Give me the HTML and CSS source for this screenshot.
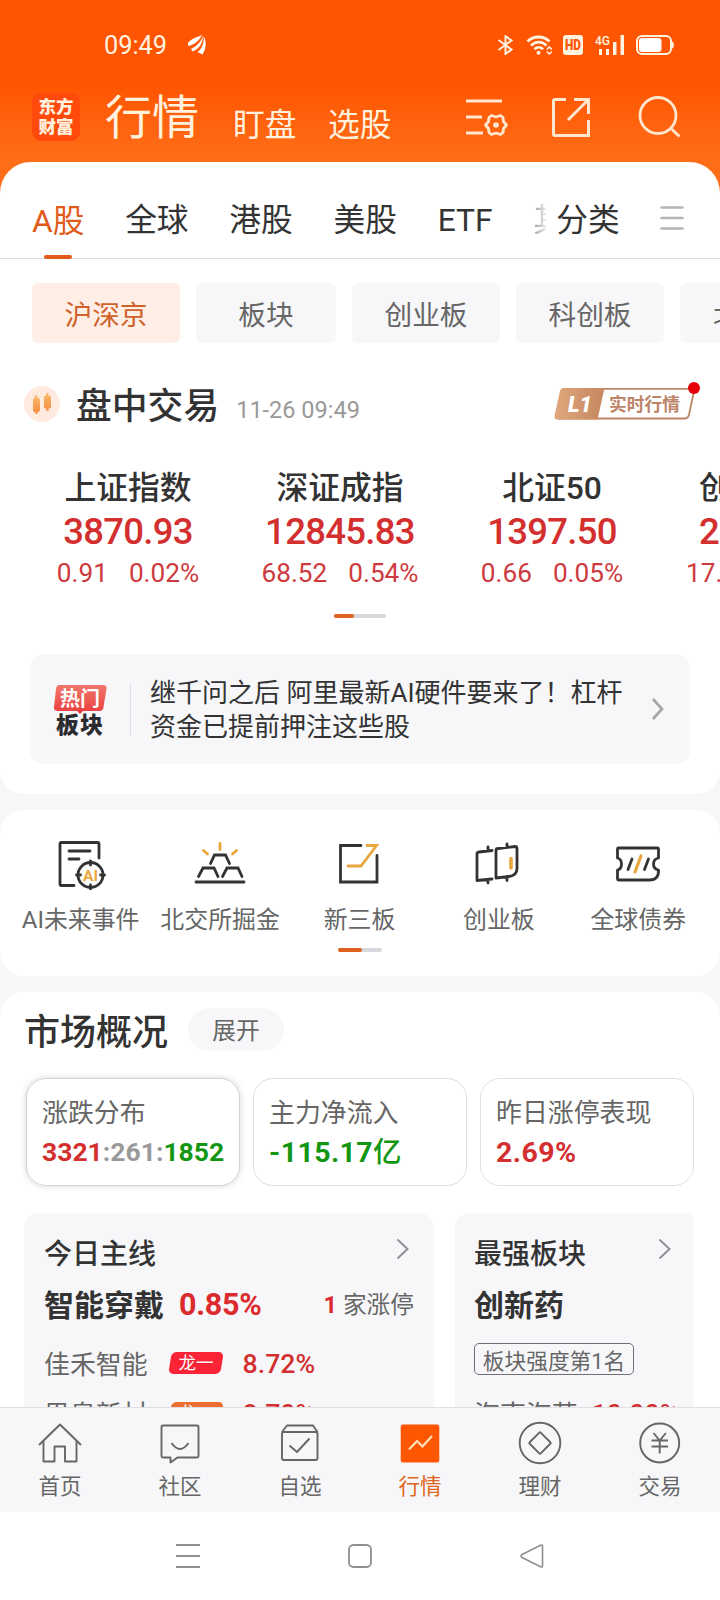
FILE: index.html
```html
<!DOCTYPE html>
<html lang="zh-CN">
<head>
<meta charset="utf-8">
<title>行情</title>
<link rel="stylesheet" href="styles.css">
</head>
<body>
<div class="phone">
  <main class="content">
    <div class="status">
      <span class="clock">09:49</span>
      <svg class="arrow" width="18" height="20" viewBox="0 0 18 20" fill="#fff"><path d="M0 8C3 4 8 2.500 14 0 11 6 6.500 9.800.300 11zM3 13.800C9.500 11 12.500 7 15 1 14.800 9 10.500 14.500 4.500 16.500zM9.500 17C14.500 13 16 8 15.700 1 19 7 18 14 14.500 19.500z"/></svg>
      <div class="status-icons">
        <svg width="16" height="20" viewBox="0 0 16 20" fill="none" stroke="#fff3e0" stroke-width="2"><path d="M.500 5l13 9.500-6 4.500V1l6 4.500L.500 15"/></svg>
        <svg class="wifi" width="27" height="20" viewBox="0 0 27 20" fill="none" stroke="#fff3e0" stroke-width="2.800"><path d="M1.500 6.500c6-6 16-6 22 0M5 10.500c4.500-4.500 11-4.500 15.500 0M8.500 14.200c2.500-2.500 6-2.500 8.500 0"/><circle cx="12.500" cy="17.700" r="2" fill="#fff3e0" stroke="none"/><path d="M20.800 14.500L23.300 12l2.500 2.500M20.800 16.500l2.500 2.500 2.500-2.500" stroke-width="1.600"/></svg>
        <svg width="20" height="20" viewBox="0 0 20 20"><rect width="20" height="20" rx="3" fill="#fff3e0"/><text class="hd" x="2" y="15.200" textLength="16" lengthAdjust="spacingAndGlyphs">HD</text></svg>
        <svg class="signal" width="29" height="20" viewBox="0 0 29 20" fill="#fff3e0"><text class="g4" x="0" y="10" textLength="15" lengthAdjust="spacingAndGlyphs">4G</text><path d="M4 14h3v6H4zM11 14h3v6h-3zM18 7h3.500v13H18zM25.500 0H29v20h-3.500z"/></svg>
        <svg width="38" height="20" viewBox="0 0 38 20"><rect x="1" y="1" width="34" height="18" rx="5" fill="none" stroke="#fff3e0" stroke-width="2"/><rect x="3" y="3" width="22.500" height="14" rx="3" fill="#fff"/><path d="M36 6.500c2.500 0 2.500 7 0 7z" fill="#fff3e0"/></svg>
      </div>
    </div>
    <header class="header">
      <div class="logo"><span>东方</span><span>财富</span></div>
      <h1 class="title">行情</h1>
      <span class="sub">盯盘</span>
      <span class="sub">选股</span>
      <div class="header-icons">
        <svg width="42" height="42" viewBox="0 0 42 42" fill="none" stroke="#ffe7cf" stroke-width="2.800"><path d="M0 5h36M0 21h16M0 37h17"/><path stroke-linejoin="round" d="M25.500 19.500l4.500 1.500 4.500-1.500 2.500 2 .500 4 3 3.500-3 3.500-.500 4-2.500 2-4.500-1.500-4.500 1.500-2.500-2-.500-4-3-3.500 3-3.500.500-4z"/><circle cx="30" cy="29" r="2.800" fill="#ffe7cf" stroke="none"/></svg>
        <svg class="share" width="38" height="42" viewBox="0 0 38 42" fill="none" stroke="#ffe7cf" stroke-width="3"><path d="M14 3.500H3Q1.500 3.500 1.500 5v33q0 1.500 1.500 1.500h33.500V24M22 3.500h14.500V18M36 4L16 24"/></svg>
        <svg width="42" height="42" viewBox="0 0 42 42" fill="none" stroke="#ffe7cf" stroke-width="2.800"><circle cx="20" cy="19.500" r="18"/><path d="M32.500 32l9 8.500"/></svg>
      </div>
    </header>

    <section class="sheet">
      <nav class="tabs">
        <span class="tab active">A股</span>
        <span class="tab">全球</span>
        <span class="tab">港股</span>
        <span class="tab">美股</span>
        <span class="tab">ETF</span>
        <span class="tab faded">其</span>
        <span class="tab more">分类</span>
        <svg class="burger" width="24" height="26" viewBox="0 0 24 26" stroke="#b4b4b4" stroke-width="2.600" stroke-linecap="round"><path d="M1.500 2.500h21M1.500 13h21M1.500 23.500h21"/></svg>
      </nav>
      <div class="chips">
        <span class="chip on">沪深京</span>
        <span class="chip two">板块</span>
        <span class="chip">创业板</span>
        <span class="chip">科创板</span>
        <span class="chip cut">北</span>
      </div>
      <div class="session">
        <svg width="36" height="36" viewBox="0 0 36 36"><defs><linearGradient id="candle" x1="0" y1="0" x2="0" y2="1"><stop offset="0" stop-color="#f9bd72"/><stop offset="1" stop-color="#f48a3c"/></linearGradient></defs><circle cx="18" cy="18" r="18" fill="#feeade"/><path d="M9 13.500q0-1 1.500-1.500V9.500h3V12q2.500 0 2.500 1.500v11q0 1-2.500 1.500v2h-2v-2q-2.500 0-2.500-1.500z" fill="url(#candle)"/><path d="M20 10.500q0-1 2-1V7h2.500v2.500q2.500 0 2.500 1v11q0 1-2.500 1V25h-2v-2.500q-2.500 0-2.500-1z" fill="url(#candle)"/></svg>
        <h2 class="session-title">盘中交易</h2>
        <span class="session-time">11-26 09:49</span>
        <svg class="badge" width="148" height="40" viewBox="0 0 148 40"><defs><linearGradient id="bronze"><stop offset="0" stop-color="#dfa77c"/><stop offset="1" stop-color="#c58761"/></linearGradient></defs><path d="M9 8.800h131.500l-5.500 26q-1 3.700-4 3.700H5q-3.500 0-2.500-3.500l5-23.500q.800-2.700 3.500-2.700z" fill="#fff" stroke="#bd8468" stroke-width="1.800"/><path d="M10 8h40.500L43.500 39.500H3.500Q0 39.500.500 36L6 11q.700-3 4-3z" fill="url(#bronze)"/><text class="badge-l1" x="14" y="32" textLength="24" lengthAdjust="spacingAndGlyphs">L1</text><text class="badge-text" x="55" y="30.500" textLength="71">实时行情</text><circle cx="140" cy="8" r="6" fill="#e60008"/></svg>
      </div>
      <div class="indices">
        <div class="index"><b class="name">上证指数</b><b class="value">3870.93</b><span class="delta"><i>0.91</i><i>0.02%</i></span></div>
        <div class="index"><b class="name">深证成指</b><b class="value">12845.83</b><span class="delta"><i>68.52</i><i>0.54%</i></span></div>
        <div class="index"><b class="name">北证50</b><b class="value">1397.50</b><span class="delta"><i>0.66</i><i>0.05%</i></span></div>
        <div class="index cut"><b class="name">创</b><b class="value">2</b><span class="delta"><i>17.</i></span></div>
      </div>
      <div class="pager"><i></i></div>
      <div class="news">
        <svg width="54" height="52" viewBox="0 0 54 52"><defs><linearGradient id="hot" x1="0" y1="0" x2="0" y2="1"><stop offset="0" stop-color="#f0776a"/><stop offset="1" stop-color="#ea3d3d"/></linearGradient></defs><path d="M5.500 1H49q4 0 3.500 4l-3 18q-.500 4-4 4H29l-3 3-3-3H3.500q-4 0-3.500-4L2 5q.500-4 3.500-4z" fill="url(#hot)"/><text class="hot-a" x="6" y="21.500" textLength="40">热门</text><text class="hot-b" x="2" y="48.500" textLength="47">板块</text></svg>
        <p class="news-text">继千问之后 阿里最新AI硬件要来了！杠杆资金已提前押注这些股</p>
        <svg class="chev" width="14" height="24" viewBox="0 0 14 24" fill="none" stroke="#a6a6a8" stroke-width="2.700"><path d="M2 2l9 10-9 10"/></svg>
      </div>
    </section>

    <section class="card tools">
      <div class="tool-row">
        <div class="tool">
          <svg width="52" height="52" viewBox="0 0 52 52" fill="none" stroke="#333" stroke-width="2.800" stroke-linecap="round" stroke-linejoin="round"><path d="M44 20V6q0-1.500-1.500-1.500h-36Q5 4.500 5 6v40q0 1.500 1.500 1.500H19M14 13h21M14 21h10"/><circle cx="35.500" cy="37" r="12.500"/><path d="M35.500 23v4M35.500 47v4M21.500 37h4M45.500 37h4"/><text class="ai" x="28" y="42.500" textLength="15" lengthAdjust="spacingAndGlyphs">AI</text></svg>
          <span>AI未来事件</span></div>
        <div class="tool">
          <svg width="52" height="52" viewBox="0 0 52 52" fill="none" stroke="#333" stroke-width="2.800" stroke-linecap="round"><path d="M2 44h48M16.500 25.500l4-8.500h11l4 8.500M4.500 38.500L9 30h11l4 8.500M28.500 38.500L33 30h11l4 8.500"/><path d="M26 5.500v6M9.500 12.500l4 3.500M42.500 12.500l-4 3.500" stroke="#e9a63c"/></svg>
          <span>北交所掘金</span></div>
        <div class="tool">
          <svg width="52" height="52" viewBox="0 0 52 52" fill="none" stroke="#333" stroke-width="2.800"><path d="M28 7.500H7.500V44H44V17.500" stroke-linecap="round"/><path d="M15 28h13L43.500 7.500H34" stroke="#e9a63c" stroke-linecap="round"/></svg>
          <span>新三板</span></div>
        <div class="tool">
          <svg width="52" height="52" viewBox="0 0 52 52" fill="none" stroke="#333" stroke-width="2.800" stroke-linecap="round" stroke-linejoin="round"><path d="M19 12.500L6 14q-2 .300-2 2v26.500L19 41M15 9v4M15 41.500V45M25 10.500l17-2q2 0 2 2v20q0 7-8 8L23 40V12.500q0-2 2-2zM34 6v3.500M34 38.500v4"/><path d="M38 20.500v9.500" stroke="#e9a63c" stroke-width="3.600"/></svg>
          <span>创业板</span></div>
        <div class="tool">
          <svg width="52" height="52" viewBox="0 0 52 52" fill="none" stroke="#333" stroke-width="2.800" stroke-linecap="round" stroke-linejoin="round"><path d="M6.500 10h39q1 0 1 1v9q-5 1-5 6t5 6q.500 10-9 10h-31q-1 0-1-1v-9q4-1 4-6t-4-6v-9q0-1 1-1z"/><path d="M20 21l-4 10.500M36.500 21l-4 10.500"/><path d="M29 18l-6 16" stroke="#e9a63c" stroke-width="3.200"/></svg>
          <span>全球债券</span></div>
      </div>
      <div class="pager small"><i></i></div>
    </section>

    <section class="card market">
      <div class="market-head"><h2>市场概况</h2><span class="pill">展开</span></div>
      <div class="stats">
        <div class="stat lifted"><span>涨跌分布</span><b class="ratio"><em class="up">3321</em>:261:<em class="down">1852</em></b></div>
        <div class="stat"><span>主力净流入</span><b class="down">-115.17<em class="unit">亿</em></b></div>
        <div class="stat"><span>昨日涨停表现</span><b class="up">2.69%</b></div>
      </div>
      <div class="panels">
        <div class="panel main">
          <div class="panel-head"><h3>今日主线</h3><svg width="14" height="22" viewBox="0 0 14 22" fill="none" stroke="#929296" stroke-width="2"><path d="M1.500 1.500l10 9.500-10 9.500"/></svg></div>
          <div class="theme"><b>智能穿戴</b><b class="theme-pct">0.85%</b><span class="limit"><em>1</em> 家涨停</span></div>
          <div class="stock"><span>佳禾智能</span><i class="tag"><u>龙一</u></i><b>8.72%</b></div>
          <div class="stock"><span>思泉新材</span><i class="tag second"><u>龙二</u></i><b>8.70%</b></div>
        </div>
        <div class="panel side">
          <div class="panel-head"><h3>最强板块</h3><svg width="14" height="22" viewBox="0 0 14 22" fill="none" stroke="#929296" stroke-width="2"><path d="M1.500 1.500l10 9.500-10 9.500"/></svg></div>
          <div class="theme"><b>创新药</b></div>
          <div class="rank">板块强度第1名</div>
          <div class="stock"><span>海南海药</span><b>10.00%</b></div>
        </div>
      </div>
    </section>
  </main>

  <nav class="bottom">
    <div class="item"><svg width="44" height="44" viewBox="0 0 44 44" fill="none" stroke="#666" stroke-width="1.900" stroke-linejoin="round"><path d="M1 24L22 3.500 43 24M5.500 20v20.500h11V25.500h10.500v15h11.500V20"/></svg><span>首页</span></div>
    <div class="item"><svg width="44" height="44" viewBox="0 0 44 44" fill="none" stroke="#666" stroke-width="1.900" stroke-linejoin="round"><path d="M5 4.500h34q1.500 0 1.500 1.500v29q0 1.500-1.500 1.500H19.500l-7 5v-5H5q-1.500 0-1.500-1.500V6Q3.500 4.500 5 4.500zM13.500 22q8.500 12 17 0"/></svg><span>社区</span></div>
    <div class="item"><svg width="44" height="44" viewBox="0 0 44 44" fill="none" stroke="#666" stroke-width="1.900" stroke-linejoin="round"><path d="M4 11L9 4.500h26L39.500 11"/><rect x="4" y="11" width="35.500" height="28" rx="2"/><path d="M11.500 24.500l7.500 6.500 12.500-13.500"/></svg><span>自选</span></div>
    <div class="item current"><svg width="44" height="44" viewBox="0 0 44 44"><rect x="2.700" y="3.500" width="38.600" height="38" rx="2.500" fill="#ff5600"/><path d="M11 28.500l8-8.500 5.500 5.500L34 15" fill="none" stroke="#ffe0b8" stroke-width="2.200"/></svg><span>行情</span></div>
    <div class="item"><svg width="44" height="44" viewBox="0 0 44 44" fill="none" stroke="#666" stroke-width="1.900" stroke-linejoin="round"><circle cx="22" cy="22" r="20.300"/><rect x="14.200" y="14.200" width="15.600" height="15.600" rx="1" transform="rotate(45 22 22)"/></svg><span>理财</span></div>
    <div class="item"><svg width="44" height="44" viewBox="0 0 44 44" fill="none" stroke="#666" stroke-width="1.900"><circle cx="21.700" cy="22" r="19.500"/><path d="M15.500 12l6.200 7.500 6.200-7.500M13.500 19.500h16.500M13.500 25.500h16.500M21.700 19.500v13"/></svg><span>交易</span></div>
  </nav>
  <footer class="system">
    <svg width="24" height="26" viewBox="0 0 24 26" stroke="#8f8f8f" stroke-width="1.800"><path d="M0 2h24M0 13h24M0 24h24"/></svg>
    <svg width="24" height="26" viewBox="0 0 24 26" fill="none" stroke="#8f8f8f" stroke-width="1.800"><rect x="1" y="2" width="22" height="22" rx="4.500"/></svg>
    <svg width="24" height="26" viewBox="0 0 24 26" fill="none" stroke="#8f8f8f" stroke-width="1.600"><path d="M2 11.500L20.500 2.200q2-.700 2 1.500v18.600q0 2.200-2 1.500L2 14.500q-2-1.500 0-3z"/></svg>
  </footer>
</div>
</body>
</html>
```
FILE: styles.css
```css
* { box-sizing: border-box; margin: 0; padding: 0; }
body { font-family: Roboto, "Noto Sans CJK SC", sans-serif; color: #333; }
i, em { font-style: normal; }
u { text-decoration: none; }
svg { display: block; flex: none; }
h1, h2, h3 { font-weight: 500; white-space: nowrap; }
span, b { white-space: nowrap; }

.phone { width: 720px; height: 1600px; overflow: hidden; display: flex; flex-direction: column; background: #fff; }
.content {
  height: 1407px; flex: none; overflow: hidden; background-color: #f5f7f9;
  background-image: linear-gradient(#ff5400 0, #ff5400 80px, #ff6d18 158px, #ff6d18 210px);
  background-size: 100% 210px; background-repeat: no-repeat;
}

.status { height: 90px; display: flex; align-items: center; padding: 0 46px 0 104px; }
.clock { width: 84px; font-size: 25.300px; line-height: 30px; padding-top: 1px; color: #fff3e0; }
.status-icons { margin-left: auto; display: flex; align-items: center; gap: 12px; }
.wifi { margin-right: -2px; }
.hd { font: 900 14.500px Roboto, sans-serif; fill: #ff5400; }
.g4 { font: 500 13px Roboto, sans-serif; }
.signal { overflow: visible; }

.header { height: 72px; display: flex; align-items: flex-start; padding: 0 40px 0 32px; color: #fff1dd; }
.logo { width: 48px; height: 48px; margin-top: 3px; border-radius: 9px; background: #ff4a0c; display: flex; flex-direction: column; align-items: center; justify-content: center; }
.logo span { font-size: 17.500px; font-weight: 900; line-height: 20px; }
.title { font-size: 47px; font-weight: 400; line-height: 50px; margin: 3px 0 0 25px; width: 128px; }
.sub { font-size: 31.700px; line-height: 40px; margin-top: 16px; width: 95px; }
.header-icons { display: flex; margin: 6px 0 0 auto; gap: 46px; }
.share { margin: 0 2px 0 -2px; }

.sheet { height: 632px; border-radius: 31px 31px 24px 24px; background: #fff; overflow: hidden; }
.tabs { height: 97px; display: flex; align-items: center; padding: 17px 0 0 32px; border-bottom: 1px solid #dcdcdc; font-size: 31.700px; }
.tab { line-height: 78px; margin-right: 40.800px; padding-top: 4px; }
.tab.active { color: #e05a1a; display: flex; flex-direction: column; align-items: center; }
.tab.active::after { content: ""; width: 28px; height: 4px; margin-top: -6px; border-radius: 2px; background: #e05a1a; }
.tab.faded { width: 13px; overflow: hidden; margin: 0 10px 0 0; background: linear-gradient(90deg, #999, #eee); -webkit-background-clip: text; background-clip: text; color: transparent; }
.tab.more { margin-right: 40px; }
.burger { margin-top: -1px; }

.chips { display: flex; gap: 16px; padding: 24px 0 0 32px; }
.chip { flex: none; width: 148px; height: 60px; border-radius: 6px; background: #f7f7fa; color: #666; font-size: 27.700px; line-height: 65px; text-align: center; }
.chip.on { background: #feeee6; color: #d0632a; }
.chip.two { width: 140px; }
.chip.cut { text-align: left; padding-left: 33px; }

.session { height: 36px; margin-top: 43px; padding-left: 24px; display: flex; align-items: center; }
.session-title { font-size: 35.800px; font-weight: 500; line-height: 40px; margin: 6px 17px 0 16px; }
.session-time { font-size: 23.500px; line-height: 30px; margin-top: 11px; color: #999; }
.badge { margin: -9px 18px 0 auto; }
.badge-l1 { font: italic 900 22px Roboto, sans-serif; fill: #fff; }
.badge-text { font: 700 17.700px "Noto Sans CJK SC", sans-serif; fill: #bd8468; }

.indices { display: flex; margin-left: 22px; padding-top: 43px; height: 192px; }
.index { flex: none; width: 212px; display: flex; flex-direction: column; align-items: center; }
.name { font-size: 31.800px; font-weight: 500; line-height: 46px; }
.value { font-size: 36.500px; font-weight: 500; line-height: 42px; letter-spacing: -.7px; color: #d32f2f; }
.delta { font-size: 26.200px; line-height: 40px; color: #cf3a3e; display: flex; gap: 21px; }
.index.cut { align-items: flex-start; padding-left: 41px; }
.index.cut .delta { margin-left: -13px; }

.pager { width: 52px; height: 4px; border-radius: 2px; background: #d5d8dc; margin: 0 auto; }
.pager i { display: block; width: 20px; height: 4px; border-radius: 2px; background: #e0601f; }
.pager.small { width: 44px; }
.pager.small i { width: 24px; }

.news { width: 660px; height: 110px; margin: 36px 0 0 30px; border-radius: 14px; background: #f7f7fa; display: flex; align-items: center; padding-left: 24px; }
.news > svg:first-child { margin-top: 1px; }
.hot-a { font: 700 20px "Noto Sans CJK SC", sans-serif; fill: #fff; }
.hot-b { font: 900 23px "Noto Sans CJK SC", sans-serif; fill: #2c2c30; }
.news-text { width: 502px; margin-left: 22px; padding: 0 0 0 19px; border-left: 1px solid #dedee2; font-size: 26px; line-height: 34px; height: 52px; margin-top: 2px; display: flex; align-items: center; }
.chev { margin-left: 19px; }

.card { margin-top: 16px; border-radius: 24px; background: #fff; }
.tools { height: 166px; padding-top: 28px; }
.tool-row { display: flex; padding: 0 11px; }
.tool { width: 139.400px; display: flex; flex-direction: column; align-items: center; color: #666; font-size: 23.900px; line-height: 36px; flex: none; gap: 12px; }
.tools .pager { margin-top: 10px; }
.ai { font: 700 15px Roboto, sans-serif; fill: #e9a63c; stroke: none; }

.market { height: 500px; padding: 16px 0 0 24px; }
.market-head { display: flex; align-items: center; height: 43px; }
.market-head h2 { font-size: 36px; line-height: 43px; width: 164px; padding-top: 8px; }
.pill { width: 96px; height: 43px; border-radius: 22px; background: #f7f7fa; color: #666; font-size: 23.700px; line-height: 47px; text-align: center; }
.stats { display: flex; gap: 13px; padding: 27px 0 0 2px; }
.stat { width: 214px; height: 108px; border: 1px solid #e0e0e2; border-radius: 20px; padding: 14px 0 0 15px; display: flex; flex-direction: column; font-size: 25.900px; line-height: 40px; color: #666; }
.stat b { font-size: 28.500px; line-height: 40px; font-weight: 700; letter-spacing: .4px; }
.stat .unit { font-weight: 500; }
.stat .ratio { font-size: 26.500px; line-height: 38px; letter-spacing: 0; color: #999; }
.stat.lifted { border-color: #d2d2d2; box-shadow: 0 0 6px rgba(0, 0, 0, .17); }
.up { color: #d32f2f; }
.down { color: #129612; }
.panels { display: flex; gap: 21px; margin-top: 27px; width: 669px; overflow: hidden; }
.panel { background: #f7f7fa; height: 280px; padding: 20px 20px 0 20px; flex: none; }
.panel.main { width: 410px; border-radius: 15px; }
.panel.side { width: 238px; padding: 20px 17px 0 19px; border-radius: 15px 0 0 0; }
.panel-head { display: flex; justify-content: space-between; height: 44px; }
.panel-head svg { margin: 5px 4px 0 0; }
.panel h3 { font-size: 28px; font-weight: 500; line-height: 43px; }
.theme { display: flex; align-items: center; height: 52px; font-size: 30px; }
.theme-pct { margin: 2px 0 0 15px; font-size: 30.500px; color: #dc2b2e; letter-spacing: -.300px; }
.limit { margin-left: auto; font-size: 23.700px; color: #666; }
.limit em { color: #dc2b2e; font-weight: 700; }
.stock { display: flex; align-items: center; height: 40px; margin-top: 13px; font-size: 25.900px; color: #666; }
.stock + .stock { margin-top: 10px; }
.stock b { margin: 3px 0 0 21px; font-size: 26.700px; font-weight: 500; color: #d32f2f; }
.tag { width: 52px; height: 22px; margin: 1px 0 0 22px; border-radius: 5px; background: #fb2437; color: #fff; transform: skewX(-9deg); font-size: 17.500px; line-height: 22px; text-align: center; }
.tag.second { background: #ee6e31; }
.tag u { display: block; transform: skewX(9deg); }
.rank { width: 160px; height: 32px; margin-top: 14px; border: 1px solid #707074; border-radius: 5px; font-size: 21.700px; line-height: 35px; text-align: center; color: #666; white-space: nowrap; }
.side .stock { margin-top: 17px; }
.side .stock b { margin-left: 14px; }

.bottom { height: 105px; flex: none; display: flex; background: #f7f7fa; border-top: 1px solid #e0e0e2; }
.item { width: 120px; padding-top: 13px; display: flex; flex-direction: column; align-items: center; font-size: 21.500px; line-height: 36px; color: #666; gap: 4px; }
.item.current { color: #e0641c; }
.system { height: 88px; display: flex; justify-content: center; align-items: center; gap: 148px; }
```
